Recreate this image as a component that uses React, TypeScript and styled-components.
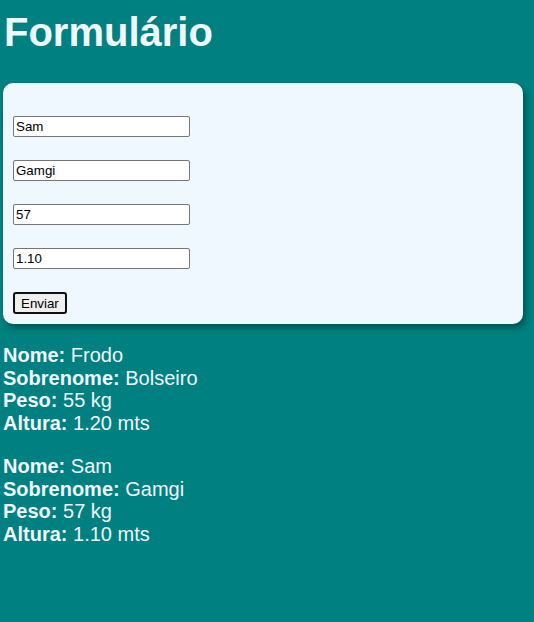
import React from "react";
import styled, { createGlobalStyle } from "styled-components";

const Global = createGlobalStyle`
  html, body { margin: 0; padding: 0; background: #008080; }
  body { font-family: "Liberation Sans", Arial, sans-serif; color: #f0f8ff; }
`;

const Page = styled.div`
  padding: 0 11px 40px 3px;
`;

const Title = styled.h1`
  margin: 9px 0 28px 1px;
  font-size: 40px;
  font-weight: bold;
  line-height: 46px;
  color: #f0f8ff;
`;

const Card = styled.form`
  background: #f0f8ff;
  border-radius: 10px;
  box-shadow: 3px 4px 6px rgba(0, 0, 0, 0.35);
  padding: 33px 10px 10px;
  display: flex;
  flex-direction: column;
  align-items: flex-start;
  gap: 23px;
`;

const Field = styled.input`
  box-sizing: border-box;
  width: 177px;
  height: 21px;
  margin: 0;
  padding: 1px 2px;
  border: 1px solid #767676;
  border-radius: 2px;
  background: #fff;
  color: #000;
  font-family: "Liberation Sans", Arial, sans-serif;
  font-size: 13.33px;
  outline: none;
`;

const Button = styled.button`
  box-sizing: border-box;
  height: 22px;
  padding: 1px 6px;
  margin: 0;
  border: 2px solid #111;
  border-radius: 3px;
  background: #efefef;
  color: #000;
  font-family: "Liberation Sans", Arial, sans-serif;
  font-size: 13.33px;
`;

const Person = styled.p`
  margin: 20px 0 0 0;
  font-size: 20px;
  line-height: 22.7px;
`;

const Line = styled.div``;

const Label = styled.b`
  font-weight: bold;
`;

const people = [
  { nome: "Frodo", sobrenome: "Bolseiro", peso: "55", altura: "1.20" },
  { nome: "Sam", sobrenome: "Gamgi", peso: "57", altura: "1.10" },
];

export default function App() {
  return (
    <>
      <Global />
      <Page>
        <Title>Formulário</Title>
        <Card onSubmit={(e) => e.preventDefault()}>
          <Field defaultValue="Sam" />
          <Field defaultValue="Gamgi" />
          <Field defaultValue="57" />
          <Field defaultValue="1.10" />
          <Button type="submit">Enviar</Button>
        </Card>
        {people.map((p) => (
          <Person key={p.nome}>
            <Line><Label>Nome:</Label> {p.nome}</Line>
            <Line><Label>Sobrenome:</Label> {p.sobrenome}</Line>
            <Line><Label>Peso:</Label> {p.peso} kg</Line>
            <Line><Label>Altura:</Label> {p.altura} mts</Line>
          </Person>
        ))}
      </Page>
    </>
  );
}
